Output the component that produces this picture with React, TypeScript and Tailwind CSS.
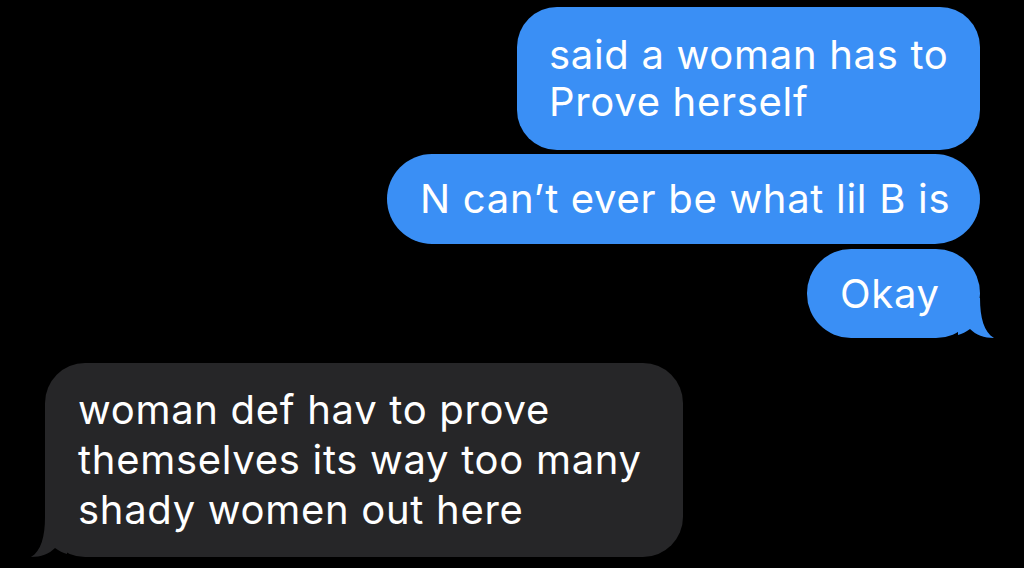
export default function App() {
  return (
    <div
      className="w-[1024px] h-[568px] bg-black overflow-hidden flex flex-col pt-[7px]"
      style={{ fontFamily: 'Inter, Roboto, "Liberation Sans", sans-serif' }}
    >
      {/* sent */}
      <div className="flex flex-col items-end pr-[44px] gap-[4px]">
        <div className="w-[463px] h-[143px] rounded-[40px] bg-[#3a8ff5] text-white text-[40px] leading-[47px] tracking-[0.7px] pl-[32px] pt-[24px] whitespace-nowrap">
          said a woman has to
          <br />
          Prove herself
        </div>
        <div className="w-[593px] h-[90px] rounded-[45px] bg-[#3a8ff5] text-white text-[40px] leading-[47px] tracking-[0.7px] pl-[33px] pt-[21px] whitespace-nowrap">
          N can’t ever be what lil B is
        </div>
        <div className="relative mt-[1px] w-[173px] h-[89px] rounded-[44px] bg-[#3a8ff5] text-white text-[40px] leading-[47px] tracking-[0.7px] pl-[33px] pt-[21px]">
          Okay
          <svg className="absolute right-[-18px] bottom-0" width="40" height="40" viewBox="0 0 40 40">
            <path d="M0 0 L22 0 C22 20 26 34 36 40 C26 40 18 37 12 31 C8 34 4 36 0 37 Z" fill="#3a8ff5" />
          </svg>
        </div>
      </div>

      {/* received */}
      <div className="pl-[45px] mt-[25px]">
        <div className="relative w-[638px] h-[194px] rounded-[40px] bg-[#262628] text-white text-[40px] leading-[50px] tracking-[0.7px] pl-[33px] pt-[22px] whitespace-nowrap">
          woman def hav to prove
          <br />
          themselves its way too many
          <br />
          shady women out here
          <svg className="absolute left-[-18px] bottom-0" width="40" height="40" viewBox="0 0 40 40">
            <path d="M40 0 L18 0 C18 20 14 34 4 40 C14 40 22 37 28 31 C32 34 36 36 40 37 Z" fill="#262628" />
          </svg>
        </div>
      </div>
    </div>
  );
}
